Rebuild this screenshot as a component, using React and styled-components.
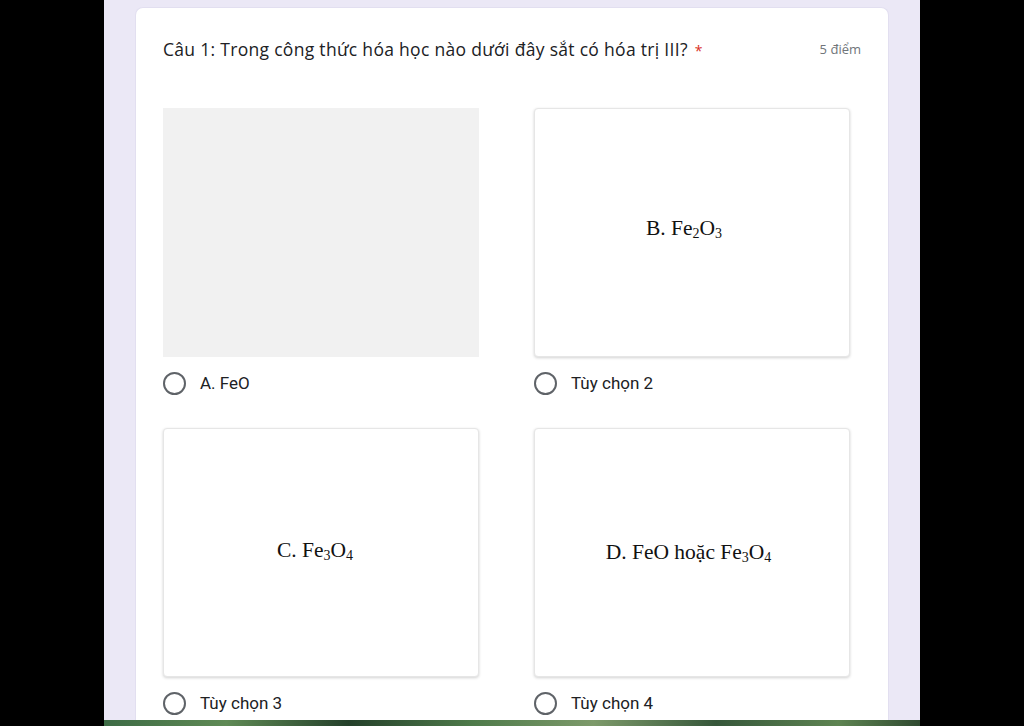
import React from 'react';
import styled, { createGlobalStyle } from 'styled-components';

const GlobalStyle = createGlobalStyle`
html, body {
margin:0;
padding:0;
background:#000;
}
`;

const Screen = styled.div`
display:flex;
flex-direction:row;
width:1024px;
height:726px;
overflow:hidden;
background:#000;
`;

const Side = styled.div`
width:${props => props.w}px;
flex-shrink:0;
background:#000;
`;

const Middle = styled.div`
display:flex;
flex-direction:column;
width:816px;
flex-shrink:0;
`;

const Panel = styled.div`
flex:1;
overflow:hidden;
background:#ebe8f6;
padding:7px 31px 0 31px;
box-sizing:border-box;
`;

const Strip = styled.div`
height:6px;
flex-shrink:0;
background:linear-gradient(90deg,#3d6b45 0%,#5f8a55 15%,#24402a 30%,#4e7a4a 45%,#7d9a6a 60%,#36573a 75%,#5e8452 90%,#2f4a30 100%);
`;

const Card = styled.div`
background:#fff;
border:1px solid #e2dff0;
border-bottom:none;
border-radius:8px 8px 0 0;
padding:29px 27px 0 27px;
min-height:100%;
box-sizing:border-box;
`;

const TitleRow = styled.div`
display:flex;
flex-direction:row;
justify-content:space-between;
align-items:center;
height:24px;
`;

const Question = styled.div`
font-family:"Open Sans","Noto Sans","Liberation Sans",sans-serif;
font-size:17.5px;
letter-spacing:0.3px;
color:#202124;
white-space:nowrap;
`;

const Star = styled.span`
color:#d93025;
margin-left:7px;
font-size:14px;
`;

const Points = styled.div`
font-family:"Open Sans","Noto Sans","Liberation Sans",sans-serif;
font-size:13px;
color:#70757a;
`;

const Grid = styled.div`
display:grid;
grid-template-columns:316px 316px;
column-gap:55px;
row-gap:33px;
margin-top:47px;
`;

const Option = styled.div`
display:flex;
flex-direction:column;
`;

const Tile = styled.div`
height:249px;
box-sizing:border-box;
display:flex;
justify-content:center;
align-items:center;
border-radius:${props => (props.blank ? '0' : '4px')};
background:${props => (props.blank ? '#f1f1f1' : '#fff')};
border:${props => (props.blank ? 'none' : '1px solid #e6e6e6')};
box-shadow:${props => (props.blank ? 'none' : '0 1px 3px rgba(0,0,0,0.18)')};
font-family:"Liberation Serif","Times New Roman",serif;
font-size:21.5px;
color:#111;
padding-bottom:${props => props.lift || 0}px;
`;

const Sub = styled.span`
font-size:14px;
position:relative;
top:3px;
`;

const Choice = styled.label`
display:flex;
flex-direction:row;
align-items:center;
gap:14px;
margin-top:14px;
height:24px;
font-family:Roboto,"Liberation Sans",sans-serif;
font-size:17px;
color:#202124;
`;

const Radio = styled.span`
display:inline-block;
width:19px;
height:19px;
border:2px solid #5f6368;
border-radius:50%;
flex-shrink:0;
`;

const options = [
  { label: 'A. FeO', blank: true },
  { label: 'Tùy chọn 2', text: <>B. Fe<Sub>2</Sub>O<Sub>3</Sub></>, lift: 8, shift: -16 },
  { label: 'Tùy chọn 3', text: <>C. Fe<Sub>3</Sub>O<Sub>4</Sub></>, lift: 4, shift: -12 },
  { label: 'Tùy chọn 4', text: <>D. FeO hoặc Fe<Sub>3</Sub>O<Sub>4</Sub></>, lift: 0, shift: -7 },
];

const App = () => {
  return (
    <>
      <GlobalStyle />
      <Screen>
        <Side w={104} />
        <Middle>
          <Panel>
            <Card>
              <TitleRow>
                <Question>
                  Câu 1: Trong công thức hóa học nào dưới đây sắt có hóa trị III?
                  <Star>*</Star>
                </Question>
                <Points>5 điểm</Points>
              </TitleRow>
              <Grid>
                {options.map(opt => (
                  <Option key={opt.label}>
                    <Tile blank={opt.blank} lift={opt.lift}>
                      {opt.text && <span style={{ marginLeft: opt.shift }}>{opt.text}</span>}
                    </Tile>
                    <Choice>
                      <Radio />
                      {opt.label}
                    </Choice>
                  </Option>
                ))}
              </Grid>
            </Card>
          </Panel>
          <Strip />
        </Middle>
        <Side w={104} />
      </Screen>
    </>
  );
};

export default App;
